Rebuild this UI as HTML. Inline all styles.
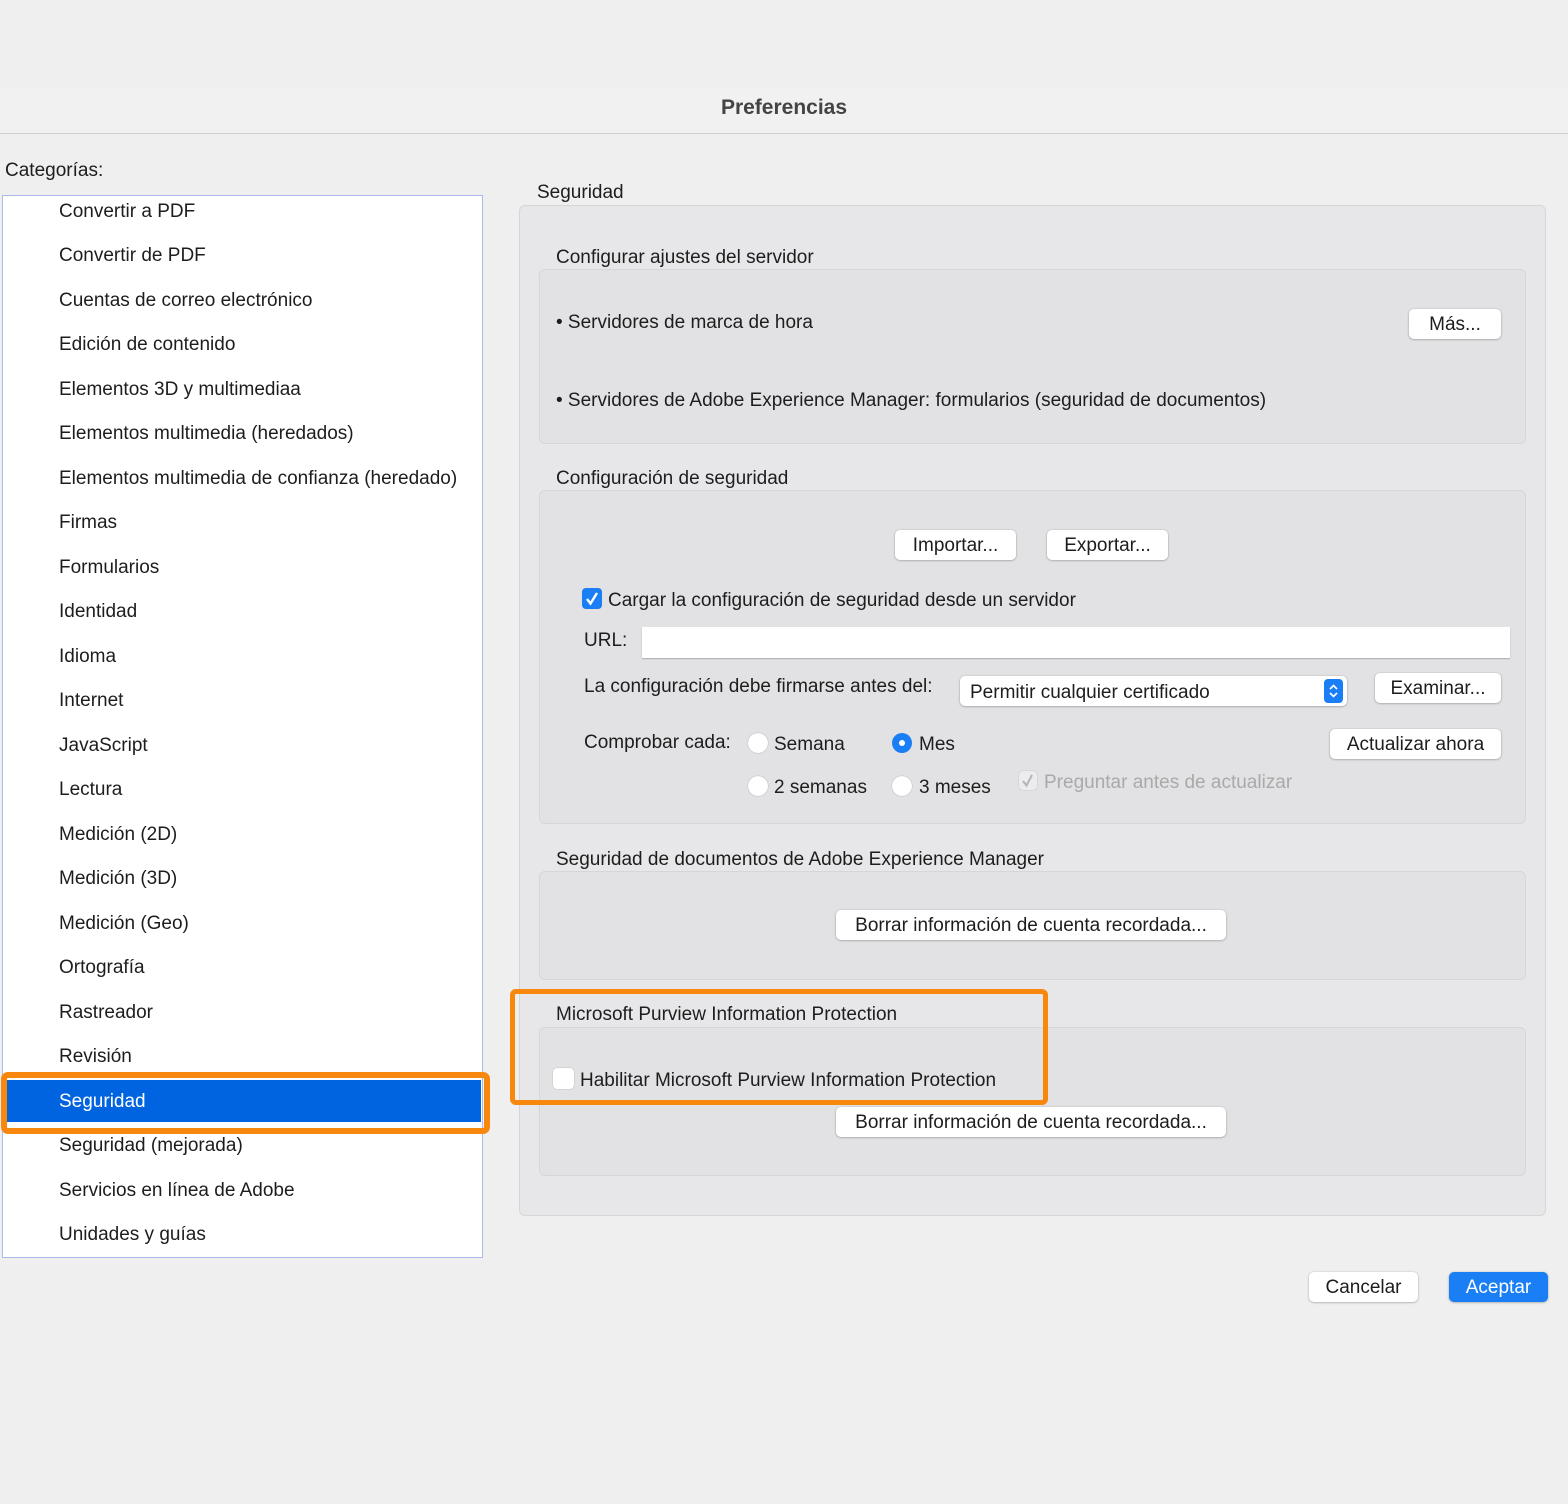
<!DOCTYPE html>
<html><head><meta charset="utf-8"><style>
*{margin:0;padding:0;box-sizing:border-box}
body{width:1568px;height:1504px;background:#efefef;font-family:"Liberation Sans",sans-serif;font-size:19px;letter-spacing:0;color:#1d1d1d;position:relative;overflow:hidden}
.a{position:absolute;white-space:nowrap;line-height:24px;margin-top:2px}
.box{position:absolute;background:#e2e2e4;border:1px solid #d6d6d8;border-radius:6px}
.btn{position:absolute;background:#fff;border-radius:5px;box-shadow:0 0.5px 2px rgba(0,0,0,.35);text-align:center;line-height:31px;height:30px;white-space:nowrap}
.rad{position:absolute;width:20px;height:20px;border-radius:50%;background:#fff;box-shadow:0 0 1px rgba(0,0,0,.45)}
</style></head><body>
<div style="position:absolute;left:0;top:88px;width:1568px;height:46px;background:#f1f1f2;border-bottom:1.5px solid #cfcfcf"></div>
<div class="a" style="left:0;width:1568px;text-align:center;top:94px;font-weight:bold;color:#444;font-size:21px">Preferencias</div>
<div class="a" style="left:5px;top:157px">Categorías:</div>
<div style="position:absolute;left:2px;top:195px;width:481px;height:1063px;background:#fff;border:1px solid #a9bbe8"></div>
<div style="position:absolute;left:7px;top:1080px;width:474px;height:42px;background:#0064e1"></div>
<div style="position:absolute;left:1px;top:1072px;width:489px;height:62px;border:6px solid #f7870d;border-radius:7px"></div>
<div class="a" style="left:59px;top:198px">Convertir a PDF</div>
<div class="a" style="left:59px;top:242px">Convertir de PDF</div>
<div class="a" style="left:59px;top:287px">Cuentas de correo electrónico</div>
<div class="a" style="left:59px;top:331px">Edición de contenido</div>
<div class="a" style="left:59px;top:376px">Elementos 3D y multimediaa</div>
<div class="a" style="left:59px;top:420px">Elementos multimedia (heredados)</div>
<div class="a" style="left:59px;top:465px">Elementos multimedia de confianza (heredado)</div>
<div class="a" style="left:59px;top:509px">Firmas</div>
<div class="a" style="left:59px;top:554px">Formularios</div>
<div class="a" style="left:59px;top:598px">Identidad</div>
<div class="a" style="left:59px;top:643px">Idioma</div>
<div class="a" style="left:59px;top:687px">Internet</div>
<div class="a" style="left:59px;top:732px">JavaScript</div>
<div class="a" style="left:59px;top:776px">Lectura</div>
<div class="a" style="left:59px;top:821px">Medición (2D)</div>
<div class="a" style="left:59px;top:865px">Medición (3D)</div>
<div class="a" style="left:59px;top:910px">Medición (Geo)</div>
<div class="a" style="left:59px;top:954px">Ortografía</div>
<div class="a" style="left:59px;top:999px">Rastreador</div>
<div class="a" style="left:59px;top:1043px">Revisión</div>
<div class="a" style="left:59px;top:1088px;color:#fff">Seguridad</div>
<div class="a" style="left:59px;top:1132px">Seguridad (mejorada)</div>
<div class="a" style="left:59px;top:1177px">Servicios en línea de Adobe</div>
<div class="a" style="left:59px;top:1221px">Unidades y guías</div>

<div class="a" style="left:537px;top:179px">Seguridad</div>
<div class="box" style="left:519px;top:205px;width:1027px;height:1011px;background:#e7e7e9"></div>
<div class="a" style="left:556px;top:244px">Configurar ajustes del servidor</div>
<div class="box" style="left:539px;top:269px;width:987px;height:175px"></div>
<div class="a" style="left:556px;top:309px">• Servidores de marca de hora</div>
<div class="btn" style="left:1409px;top:309px;width:92px">Más...</div>
<div class="a" style="left:556px;top:387px">• Servidores de Adobe Experience Manager: formularios (seguridad de documentos)</div>

<div class="a" style="left:556px;top:465px">Configuración de seguridad</div>
<div class="box" style="left:539px;top:490px;width:987px;height:334px"></div>
<div class="btn" style="left:895px;top:530px;width:121px">Importar...</div>
<div class="btn" style="left:1047px;top:530px;width:121px">Exportar...</div>
<div style="position:absolute;left:582px;top:588px;width:20px;height:21px;background:#1a7ef5;border-radius:4px"><svg width="20" height="21"><path d="M5 11 L8.5 15.5 L15 5" stroke="#fff" stroke-width="2.4" fill="none"/></svg></div>
<div class="a" style="left:608px;top:587px">Cargar la configuración de seguridad desde un servidor</div>
<div class="a" style="left:584px;top:627px">URL:</div>
<div style="position:absolute;left:642px;top:627px;width:868px;height:31px;background:#fff;box-shadow:0 1px 1px rgba(0,0,0,.25)"></div>
<div class="a" style="left:584px;top:673px">La configuración debe firmarse antes del:</div>
<div style="position:absolute;left:960px;top:676px;width:387px;height:30px;background:#fff;border-radius:5px;box-shadow:0 0.5px 2px rgba(0,0,0,.35)"></div>
<div class="a" style="left:970px;top:679px">Permitir cualquier certificado</div>
<div style="position:absolute;left:1324px;top:679px;width:19px;height:24px;background:#1a7ef5;border-radius:4px"><svg width="19" height="24"><path d="M6 10 L9.5 6.5 L13 10 M6 14 L9.5 17.5 L13 14" stroke="#fff" stroke-width="1.6" fill="none"/></svg></div>
<div class="btn" style="left:1375px;top:673px;width:126px">Examinar...</div>
<div class="a" style="left:584px;top:729px">Comprobar cada:</div>
<div class="rad" style="left:748px;top:733px"></div>
<div class="a" style="left:774px;top:731px">Semana</div>
<div class="rad" style="left:892px;top:733px;background:#1a7ef5;box-shadow:none"><div style="position:absolute;left:7px;top:7px;width:6px;height:6px;border-radius:50%;background:#fff"></div></div>
<div class="a" style="left:919px;top:731px">Mes</div>
<div class="btn" style="left:1330px;top:729px;width:171px">Actualizar ahora</div>
<div class="rad" style="left:748px;top:776px"></div>
<div class="a" style="left:774px;top:774px">2 semanas</div>
<div class="rad" style="left:892px;top:776px"></div>
<div class="a" style="left:919px;top:774px">3 meses</div>
<div style="position:absolute;left:1019px;top:771px;width:18px;height:19px;background:#ececee;border-radius:4px;box-shadow:0 0 1px rgba(0,0,0,.3)"><svg width="18" height="19"><path d="M4 10 L7.5 14.5 L13 4" stroke="#b5b5b5" stroke-width="2" fill="none"/></svg></div>
<div class="a" style="left:1044px;top:769px;color:#a9a9a9">Preguntar antes de actualizar</div>

<div class="a" style="left:556px;top:846px">Seguridad de documentos de Adobe Experience Manager</div>
<div class="box" style="left:539px;top:871px;width:987px;height:109px"></div>
<div class="btn" style="left:836px;top:910px;width:390px">Borrar información de cuenta recordada...</div>

<div class="a" style="left:556px;top:1001px">Microsoft Purview Information Protection</div>
<div class="box" style="left:539px;top:1027px;width:987px;height:149px"></div>
<div style="position:absolute;left:553px;top:1068px;width:21px;height:21px;background:#fff;border-radius:4px;box-shadow:0 0 1px rgba(0,0,0,.4)"></div>
<div class="a" style="left:580px;top:1067px">Habilitar Microsoft Purview Information Protection</div>
<div class="btn" style="left:836px;top:1107px;width:390px">Borrar información de cuenta recordada...</div>
<div style="position:absolute;left:510px;top:989px;width:538px;height:116px;border:5px solid #f7870d;border-radius:6px"></div>

<div class="btn" style="left:1309px;top:1272px;width:109px">Cancelar</div>
<div class="btn" style="left:1449px;top:1272px;width:99px;background:#1a7ef5;color:#fff">Aceptar</div>
</body></html>
